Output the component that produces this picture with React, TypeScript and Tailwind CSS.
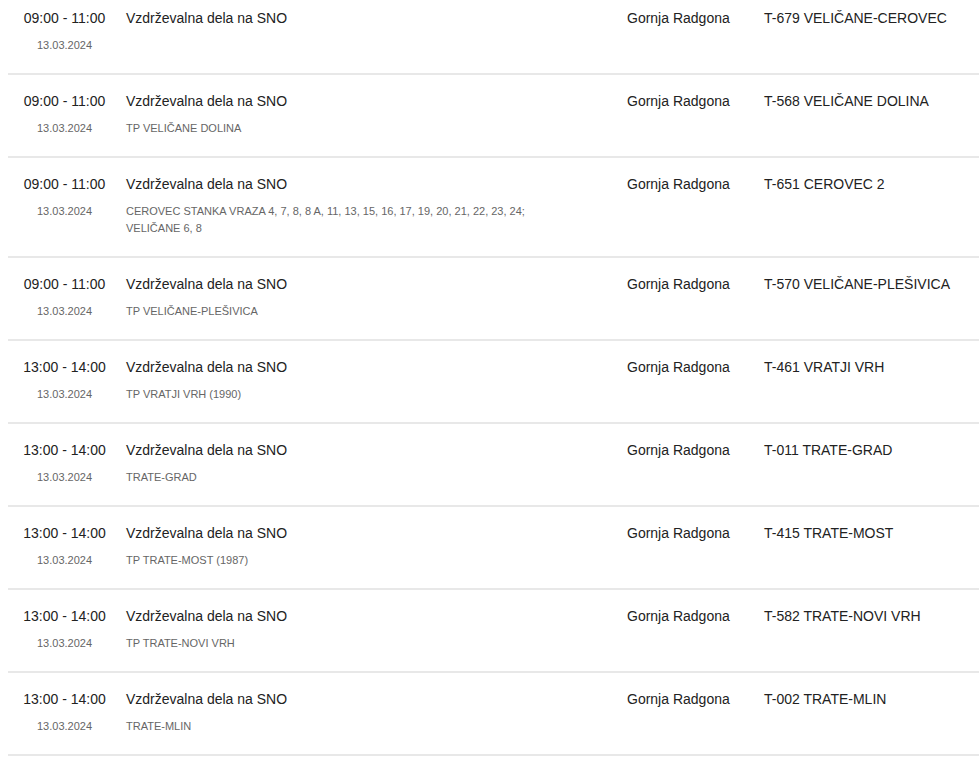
import React from 'react';

type Outage = {
  time: string;
  date: string;
  title: string;
  detail: string;
  place: string;
  station: string;
};

const outages: Outage[] = [
  { time: '09:00 - 11:00', date: '13.03.2024', title: 'Vzdrževalna dela na SNO', detail: '', place: 'Gornja Radgona', station: 'T-679 VELIČANE-CEROVEC' },
  { time: '09:00 - 11:00', date: '13.03.2024', title: 'Vzdrževalna dela na SNO', detail: 'TP VELIČANE DOLINA', place: 'Gornja Radgona', station: 'T-568 VELIČANE DOLINA' },
  {
    time: '09:00 - 11:00',
    date: '13.03.2024',
    title: 'Vzdrževalna dela na SNO',
    detail: 'CEROVEC STANKA VRAZA 4, 7, 8, 8 A, 11, 13, 15, 16, 17, 19, 20, 21, 22, 23, 24; VELIČANE 6, 8',
    place: 'Gornja Radgona',
    station: 'T-651 CEROVEC 2',
  },
  { time: '09:00 - 11:00', date: '13.03.2024', title: 'Vzdrževalna dela na SNO', detail: 'TP VELIČANE-PLEŠIVICA', place: 'Gornja Radgona', station: 'T-570 VELIČANE-PLEŠIVICA' },
  { time: '13:00 - 14:00', date: '13.03.2024', title: 'Vzdrževalna dela na SNO', detail: 'TP VRATJI VRH (1990)', place: 'Gornja Radgona', station: 'T-461 VRATJI VRH' },
  { time: '13:00 - 14:00', date: '13.03.2024', title: 'Vzdrževalna dela na SNO', detail: 'TRATE-GRAD', place: 'Gornja Radgona', station: 'T-011 TRATE-GRAD' },
  { time: '13:00 - 14:00', date: '13.03.2024', title: 'Vzdrževalna dela na SNO', detail: 'TP TRATE-MOST (1987)', place: 'Gornja Radgona', station: 'T-415 TRATE-MOST' },
  { time: '13:00 - 14:00', date: '13.03.2024', title: 'Vzdrževalna dela na SNO', detail: 'TP TRATE-NOVI VRH', place: 'Gornja Radgona', station: 'T-582 TRATE-NOVI VRH' },
  { time: '13:00 - 14:00', date: '13.03.2024', title: 'Vzdrževalna dela na SNO', detail: 'TRATE-MLIN', place: 'Gornja Radgona', station: 'T-002 TRATE-MLIN' },
];

const OutageRow: React.FC<{ item: Outage }> = ({ item }) => (
  <div className="flex border-b-2 border-[#e8e8e8] pt-4 pb-[19px] text-[14px] leading-5 text-[#222]">
    <div className="w-[113px] shrink-0 text-center">
      <div>{item.time}</div>
      <div className="mt-[9px] text-[11px] leading-[17px] text-[#666]">{item.date}</div>
    </div>
    <div className="w-[506px] shrink-0 pl-[5px]">
      <div>{item.title}</div>
      <div className="mt-[9px] max-w-[430px] text-[11px] leading-[17px] text-[#666]">
        {item.detail || '\u00a0'}
      </div>
    </div>
    <div className="w-[137px] shrink-0">{item.place}</div>
    <div className="flex-1">{item.station}</div>
  </div>
);

export default function App() {
  return (
    <div className="min-h-screen overflow-hidden bg-white font-['Liberation_Sans',Arial,sans-serif]">
      <div className="-mt-2 pl-2">
        {outages.map((o, i) => (
          <OutageRow key={i} item={o} />
        ))}
      </div>
    </div>
  );
}
